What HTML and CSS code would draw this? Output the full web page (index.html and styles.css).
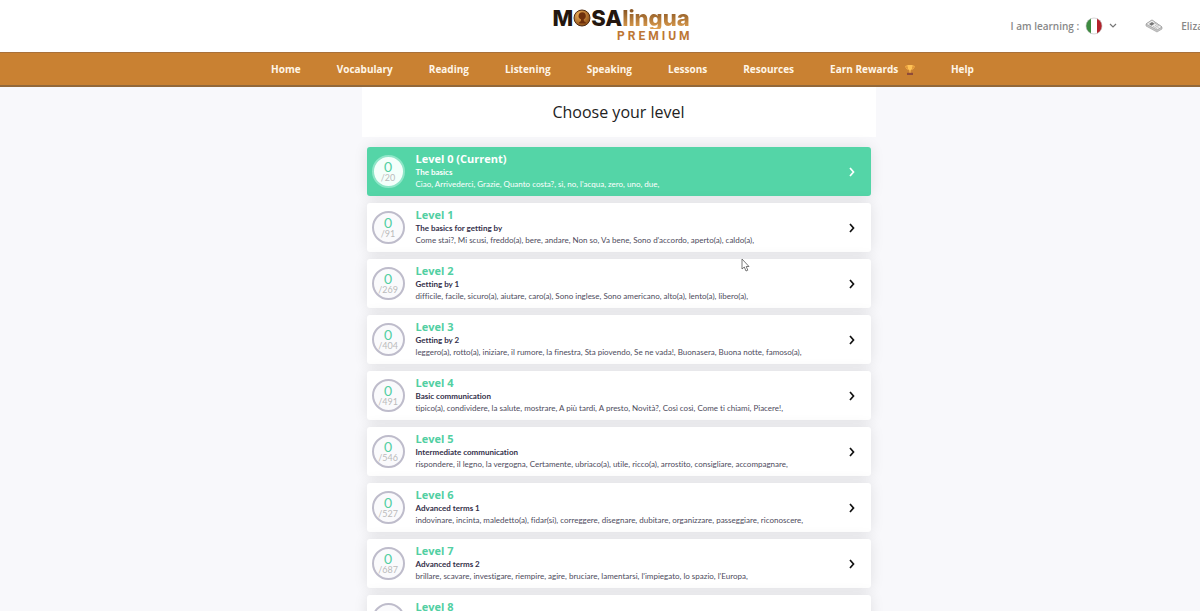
FILE: index.html
```html
<!DOCTYPE html>
<html lang="en">
<head>
  <meta charset="UTF-8">
  <title>MosaLingua Premium - Choose your level</title>
  <link rel="stylesheet" href="styles.css">
</head>
<body>
  <svg class="defs" width="0" height="0" aria-hidden="true">
    <symbol id="chevron" viewBox="0 0 8 10"><path d="M2 1l3.500 4L2 9" fill="none" stroke="currentColor" stroke-width="1.700"/></symbol>
  </svg>

  <div class="page">
    <header class="topbar">
      <a class="logo" href="#" aria-label="MosaLingua Premium">
        <span class="logo-name">
          <span class="logo-dark">M</span>
          <svg class="coin" viewBox="0 0 18 18" aria-hidden="true">
            <defs>
              <radialGradient id="gold" cx="35%" cy="30%" r="75%">
                <stop offset="0" stop-color="#f0b35c"/>
                <stop offset="1" stop-color="#8a4a14"/>
              </radialGradient>
            </defs>
            <circle cx="9" cy="9" r="8" fill="url(#gold)" stroke="#4f2c12" stroke-width="1"/>
            <path d="M5.500 7c0-2.500 1.500-3.800 3.800-3.800S12.800 4.800 12.800 7c0 1.800-.8 2.800-2 3.200V12l2 1.500v1H6v-1L8 12v-1.800C6.300 9.700 5.500 8.700 5.500 7z" fill="#6e300c"/>
          </svg>
          <span class="logo-dark">SA</span><span class="logo-gold">lingua</span>
        </span>
        <span class="logo-plan">PREMIUM</span>
      </a>

      <div class="account">
        <button class="language" type="button">
          I am learning :
          <svg class="flag" viewBox="0 0 18 18" aria-hidden="true">
            <clipPath id="round"><circle cx="9" cy="9" r="8"/></clipPath>
            <g clip-path="url(#round)">
              <path fill="#fff" d="M0 0h18v18H0z"/>
              <path fill="#3d8b40" d="M0 0h6v18H0z"/>
              <path fill="#b3222b" d="M12 0h6v18h-6z"/>
            </g>
            <circle cx="9" cy="9" r="8" fill="none" stroke="#bbb" stroke-width=".6"/>
          </svg>
          <svg class="caret" viewBox="0 0 8 6" aria-hidden="true"><path d="M1 1l3 3 3-3" fill="none" stroke="#777" stroke-width="1.200"/></svg>
        </button>
        <a class="news" href="#" aria-label="News">
          <svg viewBox="0 0 18 14" aria-hidden="true">
            <path d="M1 5l6-4 10 7v2l-5 3-11-6z" fill="#c9c9c9" stroke="#999" stroke-width=".6"/>
            <path d="M1 5l6-4 10 7-5 3z" fill="#eee" stroke="#999" stroke-width=".7"/>
            <path d="M4 5l3-2 2.500 1.700-3 2z" fill="#777"/>
            <path d="M9 3.500l5 3.500M8 7.300l4 2.300M10 6.300l3.500 2.200" stroke="#aaa" stroke-width=".7"/>
          </svg>
        </a>
        <a class="user" href="#">Eliza</a>
      </div>
    </header>

    <nav class="menu">
      <a href="#">Home</a>
      <a href="#">Vocabulary</a>
      <a href="#">Reading</a>
      <a href="#">Listening</a>
      <a href="#">Speaking</a>
      <a href="#">Lessons</a>
      <a href="#">Resources</a>
      <a href="#">Earn Rewards
        <svg class="trophy" viewBox="0 0 10 12" aria-hidden="true">
          <path d="M2.500 2H.8c0 2 .7 3 2.200 3.200M7.500 2h1.700c0 2-.7 3-2.200 3.200" fill="none" stroke="#ffb648" stroke-width=".9"/>
          <path d="M2.300 1h5.400c0 3-.8 5-2.200 5.500V9h-1V6.500C3.100 6 2.300 4 2.300 1z" fill="#ffc255"/>
          <path d="M2 8.800h6V11H2z" fill="#8e4b3a"/>
        </svg>
      </a>
      <a href="#">Help</a>
    </nav>

    <main class="levels">
      <h1>Choose your level</h1>
      <ul>
        <li><a class="card current" href="#">
          <span class="ring"><b>0</b><small>/20</small></span>
          <span class="info"><strong>Level 0 (Current)</strong><em>The basics</em><span>Ciao, Arrivederci, Grazie, Quanto costa?, sì, no, l'acqua, zero, uno, due,</span></span>
          <svg class="chevron" aria-hidden="true"><use href="#chevron"/></svg>
        </a></li>
        <li><a class="card" href="#">
          <span class="ring"><b>0</b><small>/91</small></span>
          <span class="info"><strong>Level 1</strong><em>The basics for getting by</em><span>Come stai?, Mi scusi, freddo(a), bere, andare, Non so, Va bene, Sono d'accordo, aperto(a), caldo(a),</span></span>
          <svg class="chevron" aria-hidden="true"><use href="#chevron"/></svg>
        </a></li>
        <li><a class="card" href="#">
          <span class="ring"><b>0</b><small>/269</small></span>
          <span class="info"><strong>Level 2</strong><em>Getting by 1</em><span>difficile, facile, sicuro(a), aiutare, caro(a), Sono inglese, Sono americano, alto(a), lento(a), libero(a),</span></span>
          <svg class="chevron" aria-hidden="true"><use href="#chevron"/></svg>
        </a></li>
        <li><a class="card" href="#">
          <span class="ring"><b>0</b><small>/404</small></span>
          <span class="info"><strong>Level 3</strong><em>Getting by 2</em><span>leggero(a), rotto(a), iniziare, il rumore, la finestra, Sta piovendo, Se ne vada!, Buonasera, Buona notte, famoso(a),</span></span>
          <svg class="chevron" aria-hidden="true"><use href="#chevron"/></svg>
        </a></li>
        <li><a class="card" href="#">
          <span class="ring"><b>0</b><small>/491</small></span>
          <span class="info"><strong>Level 4</strong><em>Basic communication</em><span>tipico(a), condividere, la salute, mostrare, A più tardi, A presto, Novità?, Così così, Come ti chiami, Piacere!,</span></span>
          <svg class="chevron" aria-hidden="true"><use href="#chevron"/></svg>
        </a></li>
        <li><a class="card" href="#">
          <span class="ring"><b>0</b><small>/546</small></span>
          <span class="info"><strong>Level 5</strong><em>Intermediate communication</em><span>rispondere, il legno, la vergogna, Certamente, ubriaco(a), utile, ricco(a), arrostito, consigliare, accompagnare,</span></span>
          <svg class="chevron" aria-hidden="true"><use href="#chevron"/></svg>
        </a></li>
        <li><a class="card" href="#">
          <span class="ring"><b>0</b><small>/527</small></span>
          <span class="info"><strong>Level 6</strong><em>Advanced terms 1</em><span>indovinare, incinta, maledetto(a), fidar(si), correggere, disegnare, dubitare, organizzare, passeggiare, riconoscere,</span></span>
          <svg class="chevron" aria-hidden="true"><use href="#chevron"/></svg>
        </a></li>
        <li><a class="card" href="#">
          <span class="ring"><b>0</b><small>/687</small></span>
          <span class="info"><strong>Level 7</strong><em>Advanced terms 2</em><span>brillare, scavare, investigare, riempire, agire, bruciare, lamentarsi, l'impiegato, lo spazio, l'Europa,</span></span>
          <svg class="chevron" aria-hidden="true"><use href="#chevron"/></svg>
        </a></li>
        <li><a class="card" href="#">
          <span class="ring"></span>
          <span class="info"><strong>Level 8</strong></span>
          <svg class="chevron" aria-hidden="true"><use href="#chevron"/></svg>
        </a></li>
      </ul>
    </main>
  </div>

  <svg class="pointer" viewBox="0 0 9 14" aria-hidden="true"><path d="M1 1v10l2.300-2 1.700 4 1.800-.8L5.200 8.500H8z" fill="#fff" stroke="#555" stroke-width=".8"/></svg>
</body>
</html>
```
FILE: styles.css
```css
* { box-sizing: border-box; }
body {
  margin: 0;
  height: 100vh;
  overflow: hidden;
  background: #f8f8fb;
  font-family: "Open Sans", "Noto Sans", sans-serif;
  color: #222;
}
a { color: inherit; text-decoration: none; }
.defs { display: block; }
.page { min-width: 1237px; }

/* top bar */
.topbar {
  display: grid;
  grid-template-columns: 1fr auto 1fr;
  height: 52px;
  padding-left: 5px;
  background: #fff;
}
.logo {
  grid-column: 2;
  display: flex;
  flex-direction: column;
  align-items: flex-end;
  padding-top: 7px;
}
.logo-name {
  display: flex;
  align-items: center;
  font-family: Inter, sans-serif;
  font-size: 22px;
  line-height: 22px;
  font-weight: 800;
}
.logo-dark { color: #24170f; }
.logo-gold {
  background: linear-gradient(#7c4a1c, #e0a050);
  -webkit-background-clip: text;
  background-clip: text;
  color: transparent;
}
.coin { width: 18px; height: 18px; }
.logo-plan {
  margin-right: -3px;
  font-family: Roboto, sans-serif;
  font-size: 12px;
  line-height: 14px;
  font-weight: 700;
  letter-spacing: 3px;
  color: #bd7635;
}
.account {
  display: flex;
  align-items: center;
  justify-content: flex-end;
  padding-right: 34px;
  font-size: 10px;
  font-weight: 600;
  color: #888;
}
.language {
  display: flex;
  align-items: center;
  gap: 6px;
  padding: 0;
  border: none;
  background: none;
  font: inherit;
  color: inherit;
  cursor: pointer;
}
.flag { width: 18px; height: 18px; }
.caret { width: 8px; height: 6px; }
.news { margin: 0 18px 0 28px; }
.news svg { display: block; width: 18px; height: 14px; }

/* menu */
.menu {
  display: flex;
  justify-content: center;
  height: 35px;
  padding-left: 8px;
  background: #c98132;
  border-top: 1px solid #a8703a;
  border-bottom: 2px solid #92683a;
  font-size: 10px;
  line-height: 33px;
  font-weight: 700;
  color: #fff6e8;
}
.menu a { padding: 0 18px; }
.trophy { width: 10px; height: 12px; margin-left: 4px; vertical-align: middle; }

/* level list */
.levels { max-width: 514px; margin: 0 auto; }
h1 {
  margin: 0;
  height: 50px;
  background: #fff;
  font-size: 16px;
  line-height: 50px;
  font-weight: 400;
  text-align: center;
}
.levels ul {
  display: flex;
  flex-direction: column;
  gap: 7px;
  margin: 0;
  padding: 10px 5px;
  list-style: none;
}
.card {
  display: flex;
  align-items: center;
  min-height: 49px;
  padding: 0 15px 0 5px;
  border-radius: 3px;
  background: #fff;
  box-shadow: 0 0 14px rgba(0, 0, 0, 0.1);
}
li { position: relative; }
.ring {
  display: flex;
  flex-direction: column;
  align-items: center;
  justify-content: center;
  width: 33px;
  height: 33px;
  border: 2px solid #bebccb;
  border-radius: 50%;
  background: #fafafc;
  font-family: Lato, sans-serif;
}
.ring b { font-size: 14px; line-height: 13px; font-weight: 400; color: #52cfa2; }
.ring small { font-size: 9px; line-height: 10px; color: #bbb; }
.info {
  display: flex;
  flex: 1;
  flex-direction: column;
  align-self: flex-start;
  padding: 5px 0 0 11px;
  font-family: Lato, sans-serif;
  font-variant-ligatures: none;
}
.info strong { font-family: "Open Sans", sans-serif; font-size: 11px; line-height: 14px; color: #52cfa2; }
.info em { font-size: 8px; line-height: 12px; font-weight: 700; font-style: normal; color: #34304a; }
.info span { font-size: 8px; line-height: 12px; color: #4d4b5c; }
.chevron { width: 8px; height: 10px; color: #111; }

.current { background: #54d5a7; }
.current .ring { border-color: #8fe6c8; background: #f4fffb; }
.current .info *, .current .chevron { color: #fff; }

.pointer { position: absolute; left: 741px; top: 258px; width: 9px; height: 14px; }
```
